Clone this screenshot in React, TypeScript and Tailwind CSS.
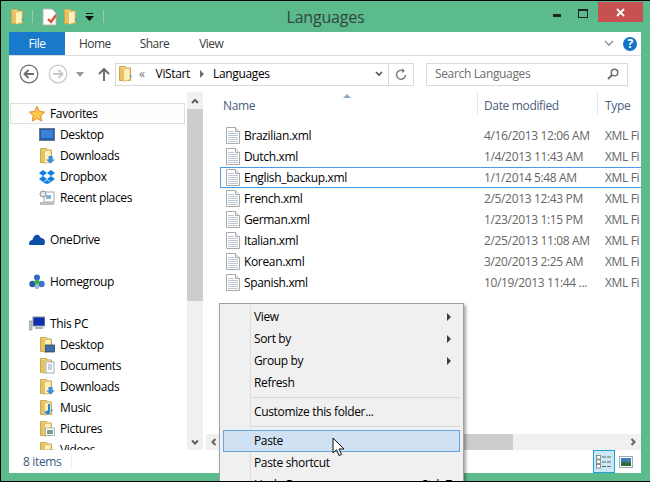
import React from "react";

const font = { fontFamily: '"Open Sans", "Noto Sans", sans-serif' };

function Folder({ overlay }: { overlay?: React.ReactNode }) {
  return (
    <svg width="16" height="16" viewBox="0 0 16 16" className="shrink-0">
      <path d="M1.500.5h6l.8 1.500h4.200v12.500h-11z" fill="#f2d377" stroke="#c9a94f" strokeWidth="1" />
      <path d="M5.500 3l6.500-1v11.500l-6.500 2z" fill="#fdf0b8" stroke="#d4b662" strokeWidth=".7" />
      <rect x="2" y="2" width="3" height="12" fill="#e8c261" />
      <rect x="12" y="9" width="1.500" height="2.500" fill="#4a9ad8" />
      {overlay}
    </svg>
  );
}

function DocIcon() {
  return (
    <svg width="14" height="17" viewBox="0 0 14 17" className="shrink-0">
      <path d="M.5.500h9l4 4v12h-13z" fill="#fff" stroke="#a9a9a9" />
      <path d="M9.500.5v4h4" fill="#eee" stroke="#a9a9a9" />
      <path d="M2 4.500h6M2 6.500h10M2 8.500h10M2 10.500h10M2 12.500h10M2 14.500h10" stroke="#b9c6d3" strokeWidth="1" />
    </svg>
  );
}

function Chev({ d }: { d: "up" | "down" | "left" | "right" }) {
  const p = { up: "M2 7l3-3 3 3", down: "M2 3.500l3 3 3-3", left: "M6.500 2l-3 3 3 3", right: "M3.500 2l3 3-3 3" }[d];
  return (
    <svg width="10" height="10" viewBox="0 0 10 10">
      <path d={p} fill="none" stroke="#606060" strokeWidth="2" />
    </svg>
  );
}

function NavRow({ icon, label, indent, outlined }: { icon: React.ReactNode; label: string; indent?: boolean; outlined?: boolean }) {
  return (
    <div className={`flex h-[21px] shrink-0 items-center ${indent ? "pl-[30px]" : outlined ? "ml-[1px] mr-[2px] border border-[#dfdfdf] bg-[#fdfdfd] pl-[18px]" : "pl-[20px]"}`}>
      <span className="flex w-[20px] shrink-0 items-center justify-start">{icon}</span>
      <span className="ml-[1px] text-[12px] leading-none tracking-[-0.35px] text-black">{label}</span>
    </div>
  );
}

const files = ["Brazilian", "Dutch", "English_backup", "French", "German", "Italian", "Korean", "Spanish"];
const dates = ["4/16/2013 12:06 AM", "1/4/2013 11:43 AM", "1/1/2014 5:48 AM", "2/5/2013 12:43 PM", "1/23/2013 1:15 PM", "2/25/2013 11:08 AM", "3/20/2013 2:25 AM", "10/19/2013 11:44 ..."];

function MenuItem({ label, arrow, active, right }: { label: string; arrow?: boolean; active?: boolean; right?: string }) {
  return (
    <div className={`relative flex h-[22px] items-center text-[12px] tracking-[-0.35px] text-black ${active ? "mx-[3px] border border-[#61a6e0] bg-[#cfe1f2] pl-[30px]" : "pl-[34px] pr-[11px]"}`}>
      <span className="flex-1">{label}</span>
      {right && <span>{right}</span>}
      {arrow && (
        <svg width="5" height="8" viewBox="0 0 5 8"><path d="M0 0l4 4-4 4z" fill="#404040" /></svg>
      )}
    </div>
  );
}

export default function App() {
  return (
    <div style={font} className="relative flex h-[482px] w-[650px] flex-col overflow-hidden border-t border-b border-l border-black bg-[#5bbb8d]">
      {/* title bar */}
      <div className="relative flex h-[31px] shrink-0 items-center pl-[9px]">
        <Folder />
        <span className="ml-[6px] h-[13px] w-px bg-[#9cc9b0]" />
        <svg width="16" height="18" viewBox="0 0 16 18" className="ml-[9px]">
          <path d="M1 1h9l4 4v12H1z" fill="#fff" stroke="#b5b5b5" />
          <path d="M6 11l3 3 5-7" fill="none" stroke="#d8573a" strokeWidth="2.400" />
        </svg>
        <span className="ml-[5px]"><Folder /></span>
        <svg width="9" height="8" viewBox="0 0 9 8" className="ml-[6px]">
          <path d="M1 0h7v1H1zM0 3h9L4.500 8z" fill="#111" />
        </svg>
        <span className="ml-[9px] h-[13px] w-px bg-[#9cc9b0]" />
        <span className="absolute left-0 right-0 text-center text-[16px] leading-none tracking-[-0.2px] text-[#33453d]">Languages</span>
        <div className="absolute right-[7px] top-[1px] flex items-start">
          <div className="flex h-[20px] w-[26px] justify-center">
            <span className="mt-[12px] h-[3px] w-[8px] bg-[#222]" />
          </div>
          <div className="flex h-[20px] w-[26px] justify-center">
            <span className="mt-[7px] h-[9px] w-[10px] border border-t-2 border-[#222]" />
          </div>
          <div className="ml-[2px] flex h-[20px] w-[45px] items-center justify-center bg-[#c75050]">
            <svg width="9" height="9" viewBox="0 0 9 9"><path d="M1 1l7 7M8 1L1 8" stroke="#fff" strokeWidth="1.800" /></svg>
          </div>
        </div>
      </div>

      {/* window */}
      <div className="mb-[8px] ml-[8px] mr-[9px] flex min-h-0 flex-1 flex-col bg-white">
        {/* ribbon tabs */}
        <div className="flex h-[24px] shrink-0 items-center border-b border-[#dadbdc] text-[12px] tracking-[-0.55px] text-[#3b3b3b]">
          <div className="flex h-[23px] w-[56px] items-center justify-center self-start bg-[#1979ca] text-white">File</div>
          <span className="ml-[14px] pt-[1px]">Home</span>
          <span className="ml-[29px] pt-[1px]">Share</span>
          <span className="ml-[30px] pt-[1px]">View</span>
          <div className="ml-auto mr-[4px] flex items-center gap-[9px]">
            <svg width="10" height="7" viewBox="0 0 10 7"><path d="M1 1l4 4 4-4" fill="none" stroke="#9a9a9a" strokeWidth="1.600" /></svg>
            <span className="flex h-[14px] w-[14px] items-center justify-center rounded-full bg-[#1473c5] text-[12px] font-bold leading-none text-white">?</span>
          </div>
        </div>

        {/* nav bar */}
        <div className="flex h-[36px] shrink-0 items-center">
          <svg width="20" height="20" viewBox="0 0 20 20" className="ml-[10px]">
            <circle cx="10" cy="10" r="8.800" fill="#fff" stroke="#6e6e6e" strokeWidth="1.200" />
            <path d="M15 10H6M9.500 6L5.500 10l4 4" fill="none" stroke="#6e6e6e" strokeWidth="1.800" />
          </svg>
          <svg width="20" height="20" viewBox="0 0 20 20" className="ml-[9px]">
            <circle cx="10" cy="10" r="8.800" fill="#fff" stroke="#c8c8c8" strokeWidth="1.200" />
            <path d="M5 10h9M10.500 6l4 4-4 4" fill="none" stroke="#c8c8c8" strokeWidth="1.800" />
          </svg>
          <svg width="8" height="5" viewBox="0 0 8 5" className="ml-[8px]"><path d="M0 0h8L4 5z" fill="#9a9a9a" /></svg>
          <svg width="12" height="14" viewBox="0 0 12 14" className="ml-[14px]"><path d="M6 14V2M1 7l5-5 5 5" fill="none" stroke="#6e6e6e" strokeWidth="2" /></svg>
          <div className="ml-[5px] flex h-[23px] w-[299px] items-center border border-[#d9d9d9] pl-[2px] text-[12px] tracking-[-0.35px] text-black">
            <Folder />
            <span className="ml-[5px] text-[#777]">«</span>
            <span className="ml-[11px]">ViStart</span>
            <svg width="5" height="8" viewBox="0 0 5 8" className="ml-[10px]"><path d="M0 0l4 4-4 4z" fill="#707070" /></svg>
            <span className="ml-[8px]">Languages</span>
            <div className="ml-auto flex h-full items-center">
              <svg width="8" height="6" viewBox="0 0 8 6" className="mr-[5px]"><path d="M1 1l3 3 3-3" fill="none" stroke="#555" strokeWidth="1.600" /></svg>
              <div className="flex h-full w-[25px] items-center justify-center border-l border-[#d9d9d9]">
                <svg width="12" height="13" viewBox="0 0 12 13"><path d="M10.500 7a4.500 4.500 0 1 1-2-4" fill="none" stroke="#808080" strokeWidth="1.500" /><path d="M7 0l3 3-3 2z" fill="#808080" /></svg>
              </div>
            </div>
          </div>
          <div className="ml-[12px] flex h-[23px] w-[202px] items-center justify-between border border-[#d9d9d9] pl-[8px] pr-[8px] text-[12px] tracking-[-0.35px] text-[#6d6d6d]">
            <span>Search Languages</span>
            <svg width="12" height="12" viewBox="0 0 12 12"><circle cx="7.500" cy="4.500" r="3.300" fill="none" stroke="#707070" strokeWidth="1.500" /><path d="M5 7l-4 4" stroke="#707070" strokeWidth="2" /></svg>
          </div>
        </div>

        {/* body */}
        <div className="flex min-h-0 flex-1">
          {/* nav pane */}
          <div className="flex w-[178px] shrink-0 flex-col overflow-hidden pt-[11px]">
            <NavRow outlined label="Favorites" icon={
              <svg width="16" height="16" viewBox="0 0 16 16"><path d="M8 .5l2.300 4.900 5.200.7-3.800 3.600 1 5.300L8 12.400l-4.700 2.600 1-5.300L.5 6.100l5.200-.7z" fill="#fbc748" stroke="#e8872c" strokeWidth="1" /></svg>
            } />
            <NavRow indent label="Desktop" icon={
              <svg width="16" height="13" viewBox="0 0 16 13"><rect x=".5" y=".5" width="15" height="12" fill="#1f5fb5" stroke="#6b7785" /><rect x="2" y="2" width="12" height="8" fill="#3f7fd6" /></svg>
            } />
            <NavRow indent label="Downloads" icon={<Folder overlay={<path d="M9.500 8v3.500H7l4.500 4 4.500-4h-2.500V8z" fill="#3b8fdc" />} />} />
            <NavRow indent label="Dropbox" icon={
              <svg width="16" height="14" viewBox="0 0 16 14"><path d="M4 0L0 3l4 3-4 3 4 3 4-3 4 3 4-3-4-3 4-3-4-3-4 3zM4 6l4-3 4 3-4 3z" fill="#0e7fe1" /><path d="M4 12.500l4-2.500 4 2.500L8 14z" fill="#0e7fe1" /></svg>
            } />
            <NavRow indent label="Recent places" icon={
              <svg width="16" height="16" viewBox="0 0 16 16"><rect x="5" y="2" width="10" height="10" fill="#fff" stroke="#9ba5ad" /><circle cx="4" cy="4" r="3" fill="#dfe5e8" stroke="#8b949b" /><rect x="1" y="12" width="14" height="3" fill="#b9bec2" /><rect x="7" y="5" width="5" height="4" fill="#7fb2d8" /></svg>
            } />
            <div className="h-[21px] shrink-0" />
            <NavRow label="OneDrive" icon={
              <svg width="16" height="11" viewBox="0 0 16 11"><path d="M0 10c0-3 2-4 3.500-4C4 3 6.500 0 9 1c1.500.5 2.500 1.700 2.800 3 2-.2 4.200 1.500 4.200 4 0 1-.3 2-.8 3H.5z" fill="#0f4ea8" /></svg>
            } />
            <div className="h-[21px] shrink-0" />
            <NavRow label="Homegroup" icon={
              <svg width="16" height="16" viewBox="0 0 16 16"><circle cx="8" cy="3.500" r="3" fill="#2f67c7" /><circle cx="3.500" cy="10" r="3.200" fill="#2b58a8" /><circle cx="12.500" cy="10" r="3.200" fill="#3a74cc" /><circle cx="8" cy="13" r="2.200" fill="#9fb7d8" /><circle cx="8" cy="8" r="2.600" fill="#39b54a" /></svg>
            } />
            <div className="h-[21px] shrink-0" />
            <NavRow label="This PC" icon={
              <svg width="16" height="15" viewBox="0 0 16 15"><rect x="0" y="5" width="3" height="9" fill="#b9c2c4" stroke="#7a8486" strokeWidth=".5" /><rect x="4" y="1" width="12" height="9" fill="#0f2fb0" stroke="#8a949c" /><rect x="6" y="11" width="8" height="2" fill="#a9b2b8" /></svg>
            } />
            <NavRow indent label="Desktop" icon={<Folder overlay={<rect x="6.500" y="8" width="9" height="7" fill="#3a6fb0" stroke="#333" strokeWidth=".7" />} />} />
            <NavRow indent label="Documents" icon={<Folder overlay={<g><rect x="7" y="4" width="8" height="11" fill="#fff" stroke="#8d9aa5" strokeWidth=".8" /><path d="M9 7h4M9 9h4M9 11h4" stroke="#8da6bf" /></g>} />} />
            <NavRow indent label="Downloads" icon={<Folder overlay={<path d="M9.500 8v3.500H7l4.500 4 4.500-4h-2.500V8z" fill="#3b8fdc" />} />} />
            <NavRow indent label="Music" icon={<Folder overlay={<path d="M11 4v8.500a2.500 2 0 1 1-2-2V4z" fill="#2a8ad8" />} />} />
            <NavRow indent label="Pictures" icon={<Folder overlay={<g><rect x="6.500" y="7" width="9" height="7.500" fill="#fff" stroke="#8d9aa5" strokeWidth=".7" /><rect x="8" y="9" width="6" height="4" fill="#7a9f8a" /></g>} />} />
            <NavRow indent label="Videos" icon={<Folder overlay={<rect x="7" y="8" width="8" height="7" fill="#555" stroke="#888" strokeWidth=".7" />} />} />
          </div>

          {/* nav scrollbar */}
          <div className="flex w-[16px] shrink-0 flex-col bg-[#f0f0f0]">
            <div className="flex h-[17px] shrink-0 items-center justify-center"><Chev d="up" /></div>
            <div className="h-[192px] bg-[#cdcdcd]" />
            <div className="flex-1" />
            <div className="flex h-[16px] shrink-0 items-center justify-center"><Chev d="down" /></div>
          </div>

          {/* file list */}
          <div className="ml-[3px] flex min-w-0 flex-1 flex-col">
            <div className="min-h-0 flex-1 overflow-hidden">
              <div className="relative flex h-[26px] items-start text-[12px] tracking-[-0.35px] text-[#4c607a]">
                <div className="mt-[1px] h-[21px] w-[271px] pl-[17px] pt-[4px]">Name</div>
                <div className="mt-[1px] h-[21px] w-[120px] border-l border-[#dde6f0] pl-[6px] pt-[4px]">Date modified</div>
                <div className="mt-[1px] h-[21px] flex-1 border-l border-[#dde6f0] pl-[7px] pt-[4px]">Type</div>
                <svg width="8" height="4" viewBox="0 0 8 4" className="absolute left-[137px] top-[2px]"><path d="M4 0l4 4H0z" fill="#8ba9c6" /></svg>
              </div>
              <div className="pt-[7px]">
                {files.map((f, i) => (
                  <div key={f} className={`flex h-[21px] items-center whitespace-nowrap text-[12px] tracking-[-0.35px] text-black ${f === "English_backup" ? "ml-[14px] border border-r-0 border-[#4a9bea] pl-[5px]" : "pl-[20px]"}`}>
                    <span className="w-[18px] shrink-0"><DocIcon /></span>
                    <span className="w-[240px] shrink-0">{f}.xml</span>
                    <span className="w-[121px] shrink-0 text-[#666]">{dates[i]}</span>
                    <span className="text-[#666]">XML Fi</span>
                  </div>
                ))}
              </div>
            </div>
            {/* h scrollbar */}
            <div className="flex h-[16px] shrink-0 items-center bg-[#f0f0f0]">
              <span className="flex w-[16px] justify-center"><Chev d="left" /></span>
              <div className="h-full w-[291px] bg-[#cdcdcd]" />
              <span className="ml-auto flex w-[16px] justify-center"><Chev d="right" /></span>
            </div>
          </div>
        </div>

        {/* status bar */}
        <div className="flex h-[23px] shrink-0 items-center">
          <span className="ml-[14px] pt-[1px] text-[12px] tracking-[-0.35px] text-[#3d5a80]">8 items</span>
          <span className="ml-[10px] h-[14px] w-px bg-[#f0f0f0]" />
          <div className="ml-auto mr-[8px] flex h-full items-center gap-[4px]">
            <div className="flex h-full w-[22px] items-center justify-center border border-[#26a0da] bg-[#cbe8f6]">
              <svg width="16" height="14" viewBox="0 0 16 14">
                <rect x=".5" y=".5" width="4" height="3.500" fill="#fff" stroke="#777" strokeWidth=".8" />
                <rect x=".5" y="5" width="4" height="3.500" fill="#fff" stroke="#777" strokeWidth=".8" />
                <rect x=".5" y="9.500" width="4" height="3.500" fill="#fff" stroke="#777" strokeWidth=".8" />
                <path d="M6 2h9M6 7h9M6 11.500h9" stroke="#666" strokeWidth="1" strokeDasharray="4 1" />
              </svg>
            </div>
            <svg width="14" height="12" viewBox="0 0 14 12">
              <rect x=".5" y=".5" width="13" height="11" fill="#fff" stroke="#a0aab2" />
              <rect x="2" y="2" width="10" height="8" fill="#3a7fb5" />
              <path d="M2 7l3-2 3 2 4-1v4H2z" fill="#2f6a3a" />
            </svg>
          </div>
        </div>
      </div>

      {/* context menu */}
      <div className="absolute left-[218px] top-[302px] w-[245px] border border-[#a0a0a0] bg-[#f0f0f0] pt-[2px] shadow-[2px_2px_3px_rgba(0,0,0,0.35)]">
        <div className="absolute bottom-0 left-[30px] top-[2px] w-px bg-[#dcdcdc]" />
        <MenuItem label="View" arrow />
        <MenuItem label="Sort by" arrow />
        <MenuItem label="Group by" arrow />
        <MenuItem label="Refresh" />
        <div className="ml-[30px] mr-[3px] mt-[3px] h-px bg-[#d7d7d7]" />
        <div className="mt-[3px]"><MenuItem label="Customize this folder..." /></div>
        <div className="ml-[30px] mr-[3px] mt-[3px] h-px bg-[#d7d7d7]" />
        <div className="mt-[3px]"><MenuItem label="Paste" active /></div>
        <MenuItem label="Paste shortcut" />
        <MenuItem label="Undo Rename" right="Ctrl+Z" />
      </div>

      {/* cursor */}
      <svg width="14" height="21" viewBox="0 0 14 21" className="absolute left-[331px] top-[436px]">
        <path d="M1 1v15l3.500-3.300L7 18.500l2.500-1-2.500-5.500h5z" fill="#fff" stroke="#111" strokeWidth="1" />
      </svg>
    </div>
  );
}
